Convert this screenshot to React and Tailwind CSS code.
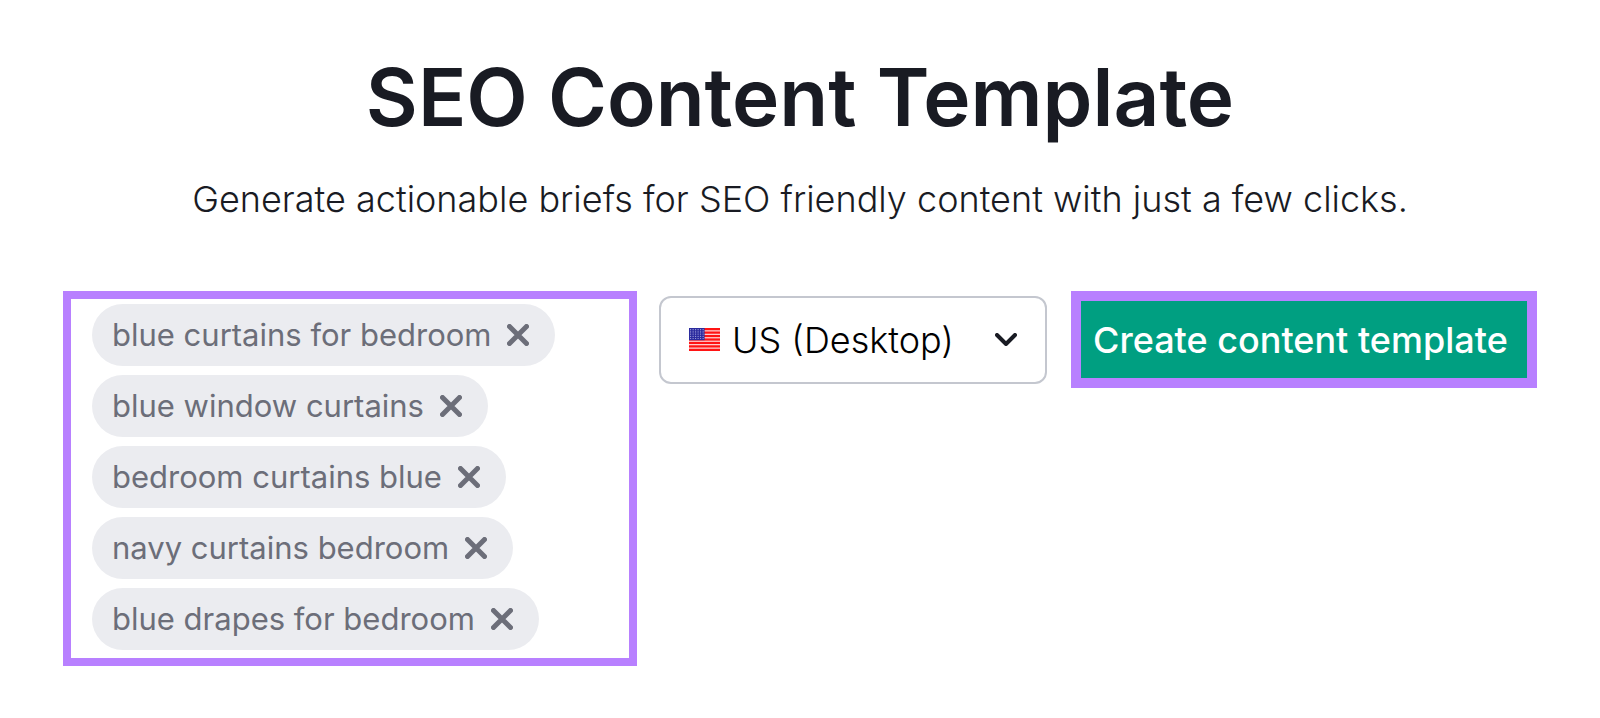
import React, { useState } from "react";

const initialKeywords = [
  "blue curtains for bedroom",
  "blue window curtains",
  "bedroom curtains blue",
  "navy curtains bedroom",
  "blue drapes for bedroom",
];

const stripes = [0, 1, 2, 3, 4, 5, 6];
const starRows = [0, 1, 2, 3, 4];
const starCols = [0, 1, 2, 3, 4, 5];

function UsFlag() {
  return (
    <svg viewBox="0 0 31 23" className="pointer-events-none col-start-1 row-start-1 ml-[30px] h-[23px] w-[31px]" aria-hidden="true">
      <rect width="31" height="23" fill="#ffe3e3" />
      {stripes.map((i) => (
        <rect key={i} y={i * 3.45} width="31" height="2.3" fill="#ff1414" />
      ))}
      <rect width="15.6" height="12.2" fill="#2b2b9e" />
      {starRows.map((r) =>
        starCols.map((c) => (
          <circle key={`${r}-${c}`} cx={1.6 + c * 2.5} cy={1.7 + r * 2.2} r="0.6" fill="#a9a9e0" />
        ))
      )}
    </svg>
  );
}

function Keyword({ text, onRemove }) {
  return (
    <li className="flex h-[62px] items-center gap-4 rounded-full bg-[#ebecf0] pr-[26px] pl-5 text-[#6c6e79]">
      <span className="text-[31px] font-normal">{text}</span>
      <button type="button" aria-label={`Remove ${text}`} onClick={onRemove}>
        <svg viewBox="0 0 22 22" className="size-[22px]" fill="none" stroke="currentColor" strokeWidth="5" strokeLinecap="round" aria-hidden="true">
          <path d="M2.5 2.5L19.5 19.5M19.5 2.5L2.5 19.5" />
        </svg>
      </button>
    </li>
  );
}

export default function App() {
  const [keywords, setKeywords] = useState(initialKeywords);
  return (
    <main className="min-h-screen bg-white px-[63px] pt-12 pb-12 font-['Inter',sans-serif] text-[#191b23]">
      <h1 className="text-center text-[80px] leading-[98px] font-semibold">SEO Content Template</h1>
      <p className="mt-[26px] text-center text-[36px] leading-[54px] font-light">
        Generate actionable briefs for SEO friendly content with just a few clicks.
      </p>
      <form className="mt-[65px] flex items-start gap-[22px]" onSubmit={(e) => e.preventDefault()}>
        <ul className="flex flex-1 flex-col items-start gap-[9px] border-8 border-[#b880ff] px-[21px] pt-[5px] pb-2">
          {keywords.map((k) => (
            <Keyword key={k} text={k} onRemove={() => setKeywords(keywords.filter((x) => x !== k))} />
          ))}
        </ul>
        <div className="flex items-center gap-6">
          <div className="grid items-center">
            <select
              aria-label="Location and device"
              className="col-start-1 row-start-1 h-[88px] w-[388px] appearance-none rounded-xl border-2 border-[#c4c7cf] bg-white pl-[71px] text-[36px] font-light text-black"
            >
              <option>US (Desktop)</option>
            </select>
            <UsFlag />
            <svg
              viewBox="0 0 22 13"
              className="pointer-events-none col-start-1 row-start-1 mr-[30px] h-[13px] w-[22px] justify-self-end"
              fill="none"
              stroke="currentColor"
              strokeWidth="4"
              strokeLinecap="round"
              strokeLinejoin="round"
              aria-hidden="true"
            >
              <path d="M2 2L11 11L20 2" />
            </svg>
          </div>
          <button
            type="submit"
            className="h-[97px] w-[466px] border-10 border-[#b880ff] bg-[#009f81] pl-3 text-left text-[36px] font-medium text-white"
          >
            Create content template
          </button>
        </div>
      </form>
    </main>
  );
}
